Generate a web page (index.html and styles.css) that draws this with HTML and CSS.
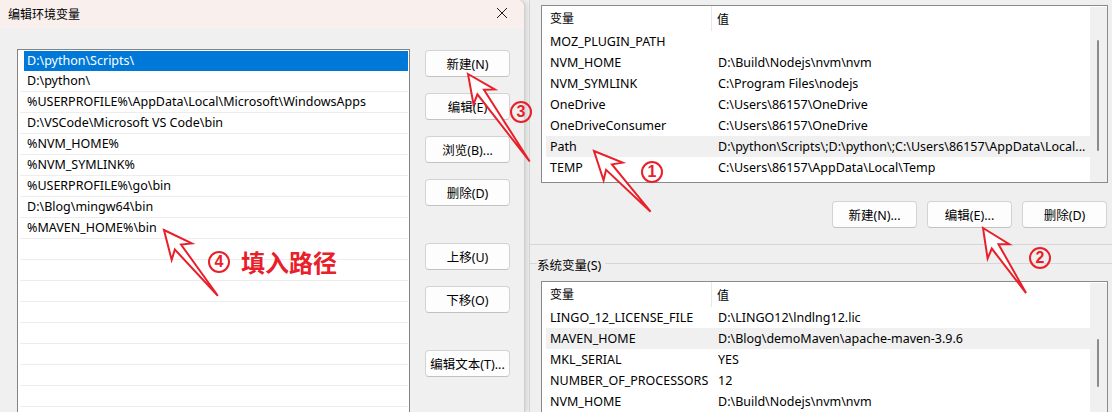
FILE: index.html
```html
<!DOCTYPE html>
<html lang="zh-CN">
<head>
<meta charset="utf-8">
<title>编辑环境变量</title>
<link rel="stylesheet" href="styles.css">
</head>
<body>
<div class="screen">
  <section class="edit-dialog">
    <header class="titlebar">
      <span class="title">编辑环境变量</span>
      <svg class="close" width="12" height="12" viewBox="0 0 12 12"><path d="M1 1L11 11M11 1L1 11"/></svg>
    </header>
    <div class="edit-body">
      <div class="path-list">
        <div class="path-row selected"><span class="path-cell">D:\python\Scripts\</span></div>
        <div class="path-row"><span class="path-cell">D:\python\</span></div>
        <div class="path-row"><span class="path-cell">%USERPROFILE%\AppData\Local\Microsoft\WindowsApps</span></div>
        <div class="path-row"><span class="path-cell">D:\VSCode\Microsoft VS Code\bin</span></div>
        <div class="path-row"><span class="path-cell">%NVM_HOME%</span></div>
        <div class="path-row"><span class="path-cell">%NVM_SYMLINK%</span></div>
        <div class="path-row"><span class="path-cell">%USERPROFILE%\go\bin</span></div>
        <div class="path-row"><span class="path-cell">D:\Blog\mingw64\bin</span></div>
        <div class="path-row"><span class="path-cell">%MAVEN_HOME%\bin</span></div>
        <div class="path-row"></div>
        <div class="path-row"></div>
        <div class="path-row"></div>
        <div class="path-row"></div>
        <div class="path-row"></div>
        <div class="path-row"></div>
        <div class="path-row"></div>
        <div class="path-row"></div>
        <div class="path-row"></div>
      </div>
      <div class="edit-buttons">
        <button class="btn">新建(N)</button>
        <button class="btn">编辑(E)</button>
        <button class="btn">浏览(B)...</button>
        <button class="btn">删除(D)</button>
        <button class="btn spaced">上移(U)</button>
        <button class="btn">下移(O)</button>
        <button class="btn spaced">编辑文本(T)...</button>
      </div>
    </div>
  </section>

  <section class="env-panel">
    <div class="user-group">
      <div class="var-list user-list">
        <div class="var-table">
          <div class="var-head"><span class="hc1">变量</span><span class="hc2">值</span></div>
          <div class="var-row"><span class="c1">MOZ_PLUGIN_PATH</span><span class="c2"></span></div>
          <div class="var-row"><span class="c1">NVM_HOME</span><span class="c2">D:\Build\Nodejs\nvm\nvm</span></div>
          <div class="var-row"><span class="c1">NVM_SYMLINK</span><span class="c2">C:\Program Files\nodejs</span></div>
          <div class="var-row"><span class="c1">OneDrive</span><span class="c2">C:\Users\86157\OneDrive</span></div>
          <div class="var-row"><span class="c1">OneDriveConsumer</span><span class="c2">C:\Users\86157\OneDrive</span></div>
          <div class="var-row hot"><span class="c1">Path</span><span class="c2">D:\python\Scripts\;D:\python\;C:\Users\86157\AppData\Local...</span></div>
          <div class="var-row"><span class="c1">TEMP</span><span class="c2">C:\Users\86157\AppData\Local\Temp</span></div>
        </div>
        <div class="scrollbar"><div class="thumb user-thumb"></div></div>
      </div>
      <div class="user-buttons">
        <button class="btn">新建(N)...</button>
        <button class="btn">编辑(E)...</button>
        <button class="btn">删除(D)</button>
      </div>
    </div>

    <div class="sys-group">
      <div class="legend"><span class="legend-line short"></span><span class="legend-text">系统变量(S)</span><span class="legend-line long"></span></div>
      <div class="var-list sys-list">
        <div class="var-table">
          <div class="var-head"><span class="hc1">变量</span><span class="hc2">值</span></div>
          <div class="var-row"><span class="c1">LINGO_12_LICENSE_FILE</span><span class="c2">D:\LINGO12\lndlng12.lic</span></div>
          <div class="var-row hot"><span class="c1">MAVEN_HOME</span><span class="c2">D:\Blog\demoMaven\apache-maven-3.9.6</span></div>
          <div class="var-row"><span class="c1">MKL_SERIAL</span><span class="c2">YES</span></div>
          <div class="var-row"><span class="c1">NUMBER_OF_PROCESSORS</span><span class="c2">12</span></div>
          <div class="var-row"><span class="c1">NVM_HOME</span><span class="c2">D:\Build\Nodejs\nvm\nvm</span></div>
        </div>
        <div class="scrollbar"><div class="thumb sys-thumb"></div></div>
      </div>
    </div>
  </section>

  <svg class="annot" width="1112" height="412" viewBox="0 0 1112 412">
    <g class="arrow">
      <polygon transform="translate(164 230) rotate(50.7)" points="0,0 28,-13 22,-4 85,0 22,4 28,13"/>
      <polygon transform="translate(594 151) rotate(47)" points="0,0 28,-13 22,-4 83,0 22,4 28,13"/>
      <polygon transform="translate(468 74) rotate(54.8)" points="0,0 28,-13 22,-4 107,0 22,4 28,13"/>
      <polygon transform="translate(983 228) rotate(56.5)" points="0,0 28,-13 22,-4 78,0 22,4 28,13"/>
    </g>
  </svg>
  <span class="mark m1">1</span>
  <span class="mark m2">2</span>
  <span class="mark m3">3</span>
  <span class="mark m4">4</span>
  <span class="note">填入路径</span>
</div>
</body>
</html>
```

FILE: styles.css
```css
* { box-sizing: border-box; }

html, body {
  margin: 0;
  padding: 0;
}

body {
  width: 1112px;
  height: 412px;
  overflow: hidden;
  background: #efefef;
  font-family: "Segoe UI", "Noto Sans", "Noto Sans CJK SC", sans-serif;
  font-size: 12.5px;
  color: #000;
}

.screen {
  position: relative;
  display: flex;
  width: 1112px;
  height: 412px;
  overflow: hidden;
}

/* ---------- edit dialog ---------- */
.edit-dialog {
  width: 525px;
  flex: none;
  display: flex;
  flex-direction: column;
  background: #f0f0f0;
  border-right: 1px solid #cfcfcf;
  border-top-right-radius: 7px;
  box-shadow: 2px 0 4px rgba(0, 0, 0, 0.12);
  position: relative;
  z-index: 1;
}

.titlebar {
  height: 28px;
  display: flex;
  align-items: center;
  justify-content: space-between;
  padding: 0 16px 2px 8px;
  background: #f9efed;
  border-top-right-radius: 7px;
}

.title {
  font-family: "Noto Sans CJK SC", sans-serif;
  font-size: 12px;
}

.close path {
  stroke: #1a1a1a;
  stroke-width: 1;
  fill: none;
}

.edit-body {
  display: flex;
  padding: 21px 0 0 17px;
  flex: 1;
  min-height: 0;
}

.path-list {
  width: 393px;
  height: 400px;
  background: #fff;
  border: 1px solid #848484;
  padding: 0 1px 0 2px;
  overflow: hidden;
}

.path-row {
  height: 21px;
  border-bottom: 1px solid #ededed;
  display: flex;
}

.path-cell {
  flex: 1;
  height: 20px;
  line-height: 20px;
  margin-left: 4px;
  padding-left: 3px;
  white-space: nowrap;
}

.path-row.selected {
  border-bottom-color: transparent;
}

.path-row.selected .path-cell {
  background: #0078d7;
  color: #fff;
  margin-top: 1px;
  line-height: 19px;
}

.edit-buttons {
  display: flex;
  flex-direction: column;
  gap: 16px;
  margin: 1px 0 0 15px;
}

.btn {
  width: 85px;
  height: 27px;
  padding: 0;
  background: #fdfdfd;
  border: 1px solid #d3d3d3;
  border-bottom-color: #c2c2c2;
  border-radius: 4px;
  font-family: "Segoe UI", "Noto Sans", "Noto Sans CJK SC", sans-serif;
  font-size: 12.5px;
  color: #000;
  white-space: nowrap;
}

.btn.spaced {
  margin-top: 21px;
}

/* ---------- environment panel ---------- */
.env-panel {
  flex: 1;
  margin-left: 4px;
  border-left: 1px solid #d6d6d6;
  padding-left: 11px;
  padding-right: 4px;
  display: flex;
  flex-direction: column;
}

.user-group {
  margin-left: -11px;
  margin-right: -4px;
  padding: 5px 4px 16px 11px;
  border-bottom: 1px solid #d6d6d6;
}

.var-list {
  display: flex;
  background: #fff;
  border: 1px solid #8a8a8a;
  overflow: hidden;
}

.user-list {
  height: 178px;
}

.var-table {
  flex: 1;
  min-width: 0;
}

.var-head {
  height: 25px;
  display: flex;
  align-items: center;
}

.hc1 {
  width: 170px;
  padding-left: 8px;
  height: 25px;
  line-height: 24px;
  border-right: 1px solid #e8e8e8;
  font-family: "Noto Sans CJK SC", sans-serif;
  font-size: 12px;
}

.hc2 {
  padding-left: 5px;
  line-height: 24px;
  font-family: "Noto Sans CJK SC", sans-serif;
  font-size: 12px;
}

.var-row {
  height: 21px;
  line-height: 21px;
  display: flex;
  margin-left: 4px;
  white-space: nowrap;
}

.var-row.hot {
  background: #f0f0f0;
}

.c1 {
  width: 166px;
  flex: none;
  padding-left: 4px;
  overflow: hidden;
}

.c2 {
  padding-left: 6px;
  overflow: hidden;
}

.scrollbar {
  width: 17px;
  flex: none;
  background: #f0f0f0;
  margin-top: 1px;
  position: relative;
}

.thumb {
  position: absolute;
  left: 7px;
  width: 2px;
  background: #8b8b8b;
  border-radius: 1px;
}

.user-thumb {
  top: 33px;
  height: 111px;
}

.sys-thumb {
  top: 56px;
  height: 48px;
}

.user-buttons {
  display: flex;
  justify-content: flex-end;
  gap: 10px;
  margin-top: 18px;
  padding-right: 1px;
}

.sys-group {
  display: flex;
  flex-direction: column;
}

.legend {
  display: flex;
  align-items: flex-start;
  margin: 12px -4px 0 -11px;
  height: 24px;
}

.legend-line {
  height: 1px;
  background: #d6d6d6;
  margin-top: 6px;
}

.legend-line.short { width: 7px; }
.legend-line.long { flex: 1; margin-left: 4px; }

.legend-text {
  line-height: 17px;
}

.sys-list {
  height: 140px;
}

/* ---------- annotations ---------- */
.annot {
  position: absolute;
  left: 0;
  top: 0;
  pointer-events: none;
  z-index: 5;
}

.arrow polygon {
  fill: #fff;
  fill-opacity: 0.85;
  stroke: #e8202a;
  stroke-width: 2;
  stroke-linejoin: miter;
}

.mark {
  position: absolute;
  z-index: 6;
  width: 22px;
  height: 22px;
  border: 2.5px solid #e8202a;
  border-radius: 50%;
  color: #e8202a;
  font-family: "Liberation Sans", "Noto Sans", sans-serif;
  font-weight: 700;
  font-size: 16px;
  line-height: 17px;
  text-align: center;
}

.m1 { left: 641px; top: 161px; }
.m2 { left: 1029px; top: 247px; }
.m3 { left: 510px; top: 101px; }
.m4 { left: 208px; top: 251px; }

.note {
  position: absolute;
  z-index: 6;
  left: 241px;
  top: 250px;
  color: #e8202a;
  font-family: "Noto Sans CJK SC", sans-serif;
  font-weight: 700;
  font-size: 24px;
  line-height: 24px;
}
```
